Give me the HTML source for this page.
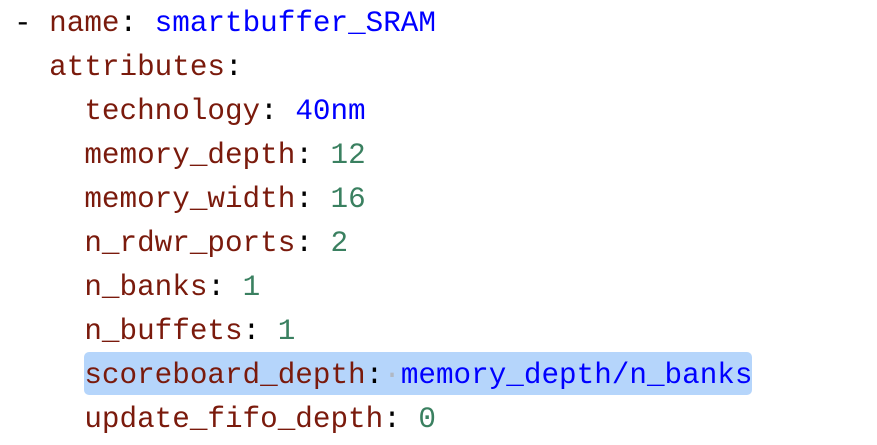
<!DOCTYPE html>
<html><head><style>
body{margin:0;background:#fff;width:877px;height:445px;overflow:hidden}
pre{margin:0;position:absolute;left:14px;top:2px;font-family:"Liberation Mono",monospace;font-size:29.3px;line-height:44px;color:#000}
.k{color:#7a1a0c}.s{color:#0000ff}.n{color:#3a8060}
.hl{position:absolute;left:84px;top:352px;width:668px;height:43px;background:#b5d5fb;border-radius:5px}
.d{color:#b0b8c4}
</style></head><body>
<div class="hl"></div>
<pre>- <span class="k">name</span>: <span class="s">smartbuffer_SRAM</span>
  <span class="k">attributes</span>:
    <span class="k">technology</span>: <span class="s">40nm</span>
    <span class="k">memory_depth</span>: <span class="n">12</span>
    <span class="k">memory_width</span>: <span class="n">16</span>
    <span class="k">n_rdwr_ports</span>: <span class="n">2</span>
    <span class="k">n_banks</span>: <span class="n">1</span>
    <span class="k">n_buffets</span>: <span class="n">1</span>
    <span class="k">scoreboard_depth</span>:<span class="d">·</span><span class="s">memory_depth/n_banks</span>
    <span class="k">update_fifo_depth</span>: <span class="n">0</span></pre>
</body></html>
